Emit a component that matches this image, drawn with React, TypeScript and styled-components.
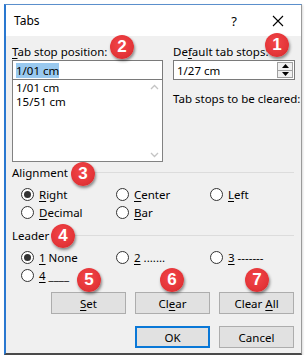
import React from "react";
import styled, { createGlobalStyle } from "styled-components";

const Global = createGlobalStyle`
  html, body { margin: 0; padding: 0; background: #ffffff; }
  body { font-family: "Noto Sans", "Open Sans", sans-serif; font-size: 11.5px; color: #000; }
`;

const Window = styled.div`
  position: relative;
  margin: 4px 0 0 4px;
  width: 298px;
  height: 351px;
  box-sizing: border-box;
  border-left: 2px solid #2a78d0;
  border-top: 1px solid #5b8fcc;
  border-right: 1px solid #9a9a9a;
  border-bottom: 2px solid #4a4a4a;
  background: #f0f0f0;
  display: flex;
  flex-direction: column;
  box-shadow: 1px 1px 2px rgba(0,0,0,0.15);
`;

const TitleBar = styled.div`
  height: 31px;
  background: #ffffff;
  display: flex;
  align-items: center;
  padding-left: 8px;
  font-size: 12px;
`;

const TitleText = styled.span`
  flex: 1;
`;

const TitleBtn = styled.span<{ $w: number; $mr?: number }>`
  width: ${(p) => p.$w}px;
  margin-right: ${(p) => p.$mr ?? 0}px;
  display: flex;
  justify-content: center;
  align-items: center;
  font-size: 13px;
`;

const Body = styled.div`
  padding: 8px 6px 0 6px;
  display: flex;
  flex-direction: column;
`;

const TopRow = styled.div`
  display: grid;
  grid-template-columns: 151px 122px;
  column-gap: 10px;
`;

const Col = styled.div`
  display: flex;
  flex-direction: column;
`;

const Label = styled.div`
  height: 16px;
  line-height: 16px;
  white-space: nowrap;
`;

const TextBox = styled.div`
  height: 20px;
  box-sizing: border-box;
  border: 1px solid #7a7a7a;
  background: #fff;
  display: flex;
  align-items: center;
  padding-left: 3px;
  position: relative;
`;

const Sel = styled.span`
  background: #99c9ef;
  line-height: 15px;
`;

const ListBox = styled.div`
  height: 82px;
  box-sizing: border-box;
  border: 1px solid #828282;
  border-top: none;
  background: #fff;
  display: flex;
`;

const ListItems = styled.div`
  flex: 1;
  padding: 1px 0 0 3px;
  display: flex;
  flex-direction: column;
`;

const ListItem = styled.div`
  height: 14px;
  line-height: 14px;
`;

const ScrollBar = styled.div`
  width: 16px;
  display: flex;
  flex-direction: column;
  justify-content: space-between;
  align-items: center;
  padding: 4px 0 3px;
`;

const Spin = styled.div`
  position: absolute;
  right: 1px;
  top: 1px;
  width: 16px;
  height: 16px;
  display: flex;
  flex-direction: column;
  border: 1px solid #a0a0a0;
  box-sizing: border-box;
`;

const SpinBtn = styled.div`
  flex: 1;
  display: flex;
  align-items: center;
  justify-content: center;
  background: #f0f0f0;
  & + & { border-top: 1px solid #a0a0a0; }
`;

const ClearedLabel = styled.div`
  margin-top: 11px;
  line-height: 16px;
  white-space: nowrap;
`;

const GroupHead = styled.div<{ $mt: number }>`
  margin-top: ${(p) => p.$mt}px;
  height: 16px;
  display: flex;
  align-items: center;
  gap: 6px;
  &::after {
    content: "";
    flex: 1;
    height: 1px;
    background: #dcdcdc;
    margin-right: 1px;
  }
`;

const RadioGrid = styled.div`
  display: grid;
  grid-template-columns: 95px 94px 80px;
  grid-auto-rows: 18px;
  padding-left: 9px;
  margin-top: 5px;
`;

const RadioItem = styled.div`
  display: flex;
  align-items: center;
  gap: 5px;
  white-space: nowrap;
`;

const Circle = styled.span<{ $on?: boolean }>`
  width: 13px;
  height: 13px;
  box-sizing: border-box;
  border-radius: 50%;
  border: 1px solid #333;
  background: #fff;
  display: flex;
  align-items: center;
  justify-content: center;
  &::after {
    content: "";
    display: ${(p) => (p.$on ? "block" : "none")};
    width: 7px;
    height: 7px;
    border-radius: 50%;
    background: #333;
  }
`;

const ButtonRow = styled.div<{ $mt: number }>`
  margin-top: ${(p) => p.$mt}px;
  display: flex;
  justify-content: flex-end;
  gap: 9px;
  padding-right: 1px;
`;

const Button = styled.div<{ $def?: boolean }>`
  width: 75px;
  height: 22px;
  box-sizing: border-box;
  border: ${(p) => (p.$def ? "2px solid #0a78d7" : "1px solid #adadad")};
  background: #e1e1e1;
  display: flex;
  align-items: center;
  justify-content: center;
`;

const Badge = styled.div<{ $x: number; $y: number }>`
  position: absolute;
  left: ${(p) => p.$x - 12 - 6}px;
  top: ${(p) => p.$y - 12 - 5}px;
  width: 24px;
  height: 24px;
  border-radius: 50%;
  background: radial-gradient(circle at 45% 40%, #f2464a 0%, #e43538 60%, #c8272a 100%);
  color: #fff;
  font-family: "Liberation Sans", Arial, sans-serif;
  font-weight: bold;
  font-size: 17px;
  display: flex;
  align-items: center;
  justify-content: center;
  box-shadow: 1px 2px 3px rgba(0,0,0,0.45);
`;

const U = styled.u`
  text-decoration: underline;
  text-underline-offset: 2px;
`;

const Chevron = ({ up }: { up?: boolean }) => (
  <svg width="9" height="6" viewBox="0 0 9 6">
    <path
      d={up ? "M1 5 L4.5 1.5 L8 5" : "M1 1 L4.5 4.5 L8 1"}
      fill="none"
      stroke="#c4c4c4"
      strokeWidth="1.3"
    />
  </svg>
);

const Tri = ({ up }: { up?: boolean }) => (
  <svg width="7" height="4" viewBox="0 0 7 4">
    <path d={up ? "M0 4 L3.5 0 L7 4 Z" : "M0 0 L3.5 4 L7 0 Z"} fill="#000" />
  </svg>
);

const Radio = ({ on, children }: { on?: boolean; children: React.ReactNode }) => (
  <RadioItem>
    <Circle $on={on} />
    <span>{children}</span>
  </RadioItem>
);

export default function App() {
  return (
    <>
      <Global />
      <Window>
        <TitleBar>
          <TitleText>Tabs</TitleText>
          <TitleBtn $w={30} $mr={6}>?</TitleBtn>
          <TitleBtn $w={46}>
            <svg width="12" height="12" viewBox="0 0 12 12">
              <path d="M1 1 L11 11 M11 1 L1 11" stroke="#000" strokeWidth="1.1" />
            </svg>
          </TitleBtn>
        </TitleBar>
        <Body>
          <TopRow>
            <Col>
              <Label>
                <U>T</U>ab stop position:
              </Label>
              <TextBox>
                <Sel>1/01 cm</Sel>
              </TextBox>
              <ListBox>
                <ListItems>
                  <ListItem>1/01 cm</ListItem>
                  <ListItem>15/51 cm</ListItem>
                </ListItems>
                <ScrollBar>
                  <Chevron up />
                  <Chevron />
                </ScrollBar>
              </ListBox>
            </Col>
            <Col>
              <Label>
                De<U>f</U>ault tab stops:
              </Label>
              <TextBox>
                1/27 cm
                <Spin>
                  <SpinBtn>
                    <Tri up />
                  </SpinBtn>
                  <SpinBtn>
                    <Tri />
                  </SpinBtn>
                </Spin>
              </TextBox>
              <ClearedLabel>Tab stops to be cleared:</ClearedLabel>
            </Col>
          </TopRow>

          <GroupHead $mt={2}>Alignment</GroupHead>
          <RadioGrid>
            <Radio on>
              <U>R</U>ight
            </Radio>
            <Radio>
              <U>C</U>enter
            </Radio>
            <Radio>
              <U>L</U>eft
            </Radio>
            <Radio>
              <U>D</U>ecimal
            </Radio>
            <Radio>
              <U>B</U>ar
            </Radio>
          </RadioGrid>

          <GroupHead $mt={6}>Leader</GroupHead>
          <RadioGrid>
            <Radio on>
              <U>1</U> None
            </Radio>
            <Radio>
              <U>2</U> .......
            </Radio>
            <Radio>
              <U>3</U> -------
            </Radio>
            <Radio>
              <U>4</U> ____
            </Radio>
          </RadioGrid>

          <ButtonRow $mt={8}>
            <Button>
              <span>
                <U>S</U>et
              </span>
            </Button>
            <Button>
              <span>
                Cl<U>e</U>ar
              </span>
            </Button>
            <Button>
              <span>
                Clear <U>A</U>ll
              </span>
            </Button>
          </ButtonRow>
          <ButtonRow $mt={12}>
            <Button $def>OK</Button>
            <Button>Cancel</Button>
          </ButtonRow>
        </Body>

        <Badge $x={277} $y={45}>1</Badge>
        <Badge $x={122} $y={47}>2</Badge>
        <Badge $x={83} $y={174}>3</Badge>
        <Badge $x={63} $y={236}>4</Badge>
        <Badge $x={89} $y={280}>5</Badge>
        <Badge $x={172} $y={280}>6</Badge>
        <Badge $x={257} $y={280}>7</Badge>
      </Window>
    </>
  );
}
